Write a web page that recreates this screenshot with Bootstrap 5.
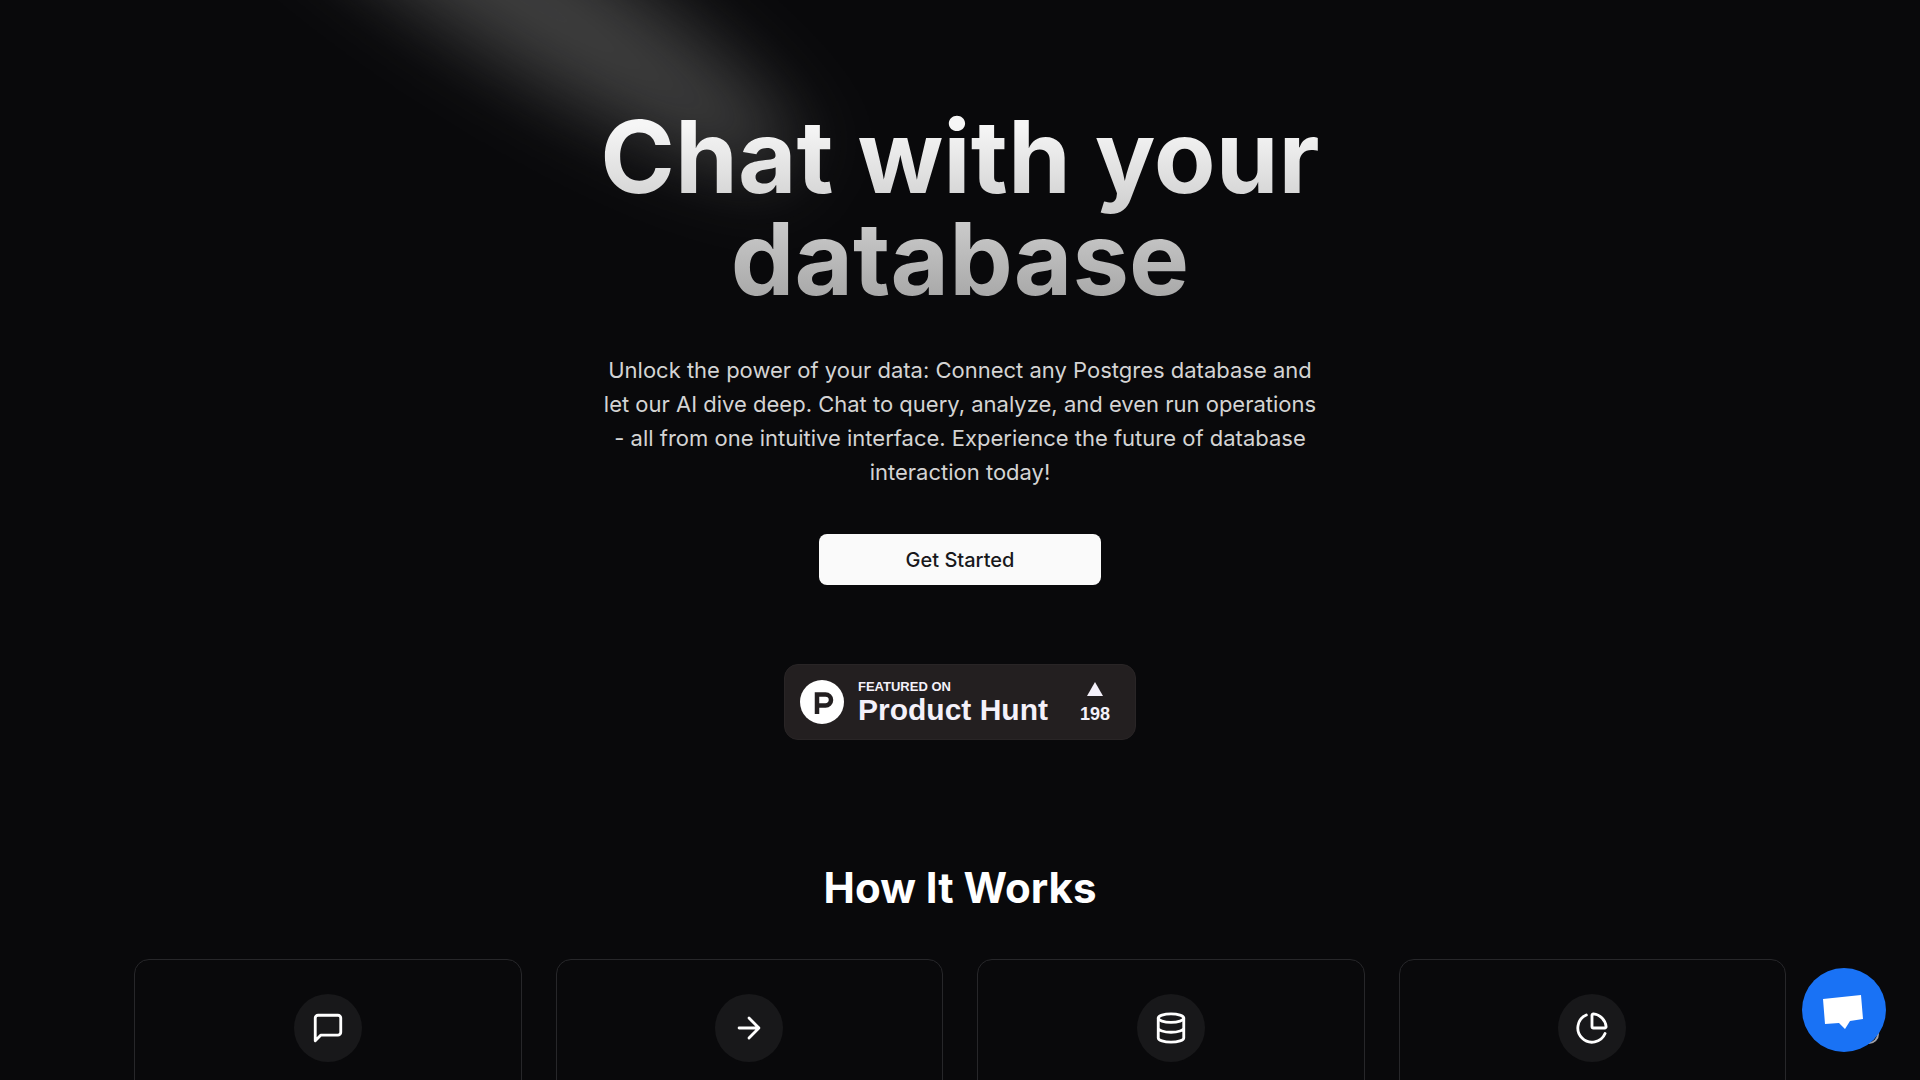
<!DOCTYPE html>
<html lang="en" data-bs-theme="dark">
<head>
<meta charset="utf-8">
<meta name="viewport" content="width=device-width, initial-scale=1">
<title>Chat with your database</title>
<link href="https://cdn.jsdelivr.net/npm/bootstrap@5.3.0/dist/css/bootstrap.min.css" rel="stylesheet">
<style>
body { background: #09090b; color: #fafafa; font-family: Inter, "Liberation Sans", sans-serif; }
.page { padding-top: 105px; }
.spotlight { top: -78px; left: 186px; width: 660px; height: 136px; border-radius: 50%; background: #3d3d3d; filter: blur(37px); transform: rotate(32deg); }
.hero { max-width: 736px; }
.hero-title { font-size: 101px; line-height: 102px; font-weight: 700; color: transparent; background: linear-gradient(#f6f6f6 10%, #a3a3a3); background-clip: text; -webkit-background-clip: text; }
.hero-text { margin-top: 44px; font-size: 22px; line-height: 34px; color: #d4d4d4; }
.btn-start { margin-top: 45px; width: 282px; height: 51px; border-radius: 8px; background: #fafafa; color: #18181b; font-size: 20px; font-weight: 500; }
.btn-start:hover { background: #e4e4e7; color: #18181b; }
.hunt { margin-top: 79px; width: 352px; height: 76px; padding: 0 25px 0 15px; border-radius: 14px; background: #231f20; border: 1px solid #292526; color: #f4f1fa; font-family: "Liberation Sans", Arial, sans-serif; font-weight: 700; }
.hunt-words { margin-left: 14px; }
.hunt-label { font-size: 13px; line-height: 16px; }
.hunt-name { font-size: 30px; line-height: 30px; }
.hunt-votes { font-size: 18px; line-height: 20px; padding-top: 2px; }
.how-title { margin: 124px 0 47px; font-size: 42px; line-height: 48px; font-weight: 700; }
.steps { max-width: 1720px; padding: 0 34px; }
.steps-row { --bs-gutter-x: 34px; }
.step { border: 1px solid #27272a; border-radius: 15px; background: #09090b; padding: 34px; }
.step-icon { width: 68px; height: 68px; background: #18181a; color: #fff; }
.chat-launch { right: 34px; bottom: 28px; width: 84px; height: 84px; }
.chat-button { background: #1972f5; }
.chat-ring { right: 7px; bottom: 8px; width: 20px; height: 20px; border: 2px solid #a1a1aa; }
</style>
<script src="https://cdn.jsdelivr.net/npm/bootstrap@5.3.0/dist/js/bootstrap.bundle.min.js"></script>
</head>
<body class="overflow-hidden">
<div class="spotlight position-absolute" aria-hidden="true"></div>
<main class="page position-relative">
  <section class="hero mx-auto d-flex flex-column align-items-center text-center">
    <h1 class="hero-title mb-0">Chat with your<br>database</h1>
    <p class="hero-text mb-0">Unlock the power of your data: Connect any Postgres database and<br>let our AI dive deep. Chat to query, analyze, and even run operations<br>- all from one intuitive interface. Experience the future of database<br>interaction today!</p>
    <button type="button" class="btn btn-start border-0 p-0">Get Started</button>
    <a href="#" class="hunt d-flex align-items-center text-decoration-none text-start">
      <svg width="44" height="44" viewBox="0 0 44 44" aria-hidden="true"><circle cx="22" cy="22" r="22" fill="#fff"/><path d="M17 34V14.500h8.500a5.500 5.500 0 0 1 0 11H17" fill="none" stroke="#231f20" stroke-width="4.500"/></svg>
      <span class="hunt-words d-flex flex-column"><span class="hunt-label">FEATURED ON</span><span class="hunt-name">Product Hunt</span></span>
      <span class="hunt-votes d-flex flex-column align-items-center gap-2 ms-auto"><svg width="16" height="14" viewBox="0 0 16 14" aria-hidden="true"><path d="M8 0l8 14H0z" fill="currentColor"/></svg>198</span>
    </a>
  </section>
  <section>
    <h2 class="how-title text-center">How It Works</h2>
    <div class="steps mx-auto">
      <div class="row steps-row">
        <div class="col-3"><div class="step d-flex justify-content-center"><div class="step-icon rounded-circle d-flex align-items-center justify-content-center"><svg width="34" height="34" viewBox="0 0 24 24" fill="none" stroke="currentColor" stroke-width="2" stroke-linecap="round" stroke-linejoin="round" aria-hidden="true"><path d="M21 15a2 2 0 0 1-2 2H7l-4 4V5a2 2 0 0 1 2-2h14a2 2 0 0 1 2 2z"/></svg></div></div></div>
        <div class="col-3"><div class="step d-flex justify-content-center"><div class="step-icon rounded-circle d-flex align-items-center justify-content-center"><svg width="34" height="34" viewBox="0 0 24 24" fill="none" stroke="currentColor" stroke-width="2" stroke-linecap="round" stroke-linejoin="round" aria-hidden="true"><path d="M5 12h14M12 5l7 7-7 7"/></svg></div></div></div>
        <div class="col-3"><div class="step d-flex justify-content-center"><div class="step-icon rounded-circle d-flex align-items-center justify-content-center"><svg width="34" height="34" viewBox="0 0 24 24" fill="none" stroke="currentColor" stroke-width="2" stroke-linecap="round" stroke-linejoin="round" aria-hidden="true"><ellipse cx="12" cy="5" rx="9" ry="3"/><path d="M3 5v14a9 3 0 0 0 18 0V5M3 12a9 3 0 0 0 18 0"/></svg></div></div></div>
        <div class="col-3"><div class="step d-flex justify-content-center"><div class="step-icon rounded-circle d-flex align-items-center justify-content-center"><svg width="34" height="34" viewBox="0 0 24 24" fill="none" stroke="currentColor" stroke-width="2" stroke-linecap="round" stroke-linejoin="round" aria-hidden="true"><path d="M21 12c.552 0 1.005-.449.950-.998a10 10 0 0 0-8.953-8.951c-.550-.055-.998.398-.998.950v8a1 1 0 0 0 1 1zM21.210 15.890A10 10 0 1 1 8 2.830"/></svg></div></div></div>
      </div>
    </div>
  </section>
</main>
<div class="chat-launch position-fixed">
  <span class="chat-ring position-absolute rounded-circle"></span>
  <button type="button" class="chat-button position-relative border-0 p-0 w-100 h-100 rounded-circle d-block" aria-label="Open chat"><svg class="d-block" width="84" height="84" viewBox="0 0 84 84" aria-hidden="true"><path d="M21 31l38-4 2 24-13 2-5 8-6-6-14 1z" fill="#fff"/></svg></button>
</div>
</body>
</html>
